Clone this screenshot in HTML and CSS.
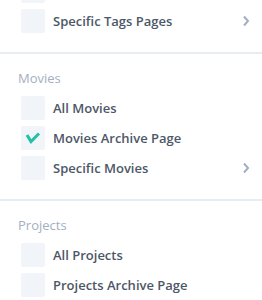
FILE: index.html
```html
<!DOCTYPE html>
<html lang="en">
<head>
<meta charset="UTF-8">
<meta name="viewport" content="width=device-width, initial-scale=1.0">
<title>Pages</title>
<link rel="stylesheet" href="styles.css">
</head>
<body>

<div class="panel">
  <div class="group first">
    <div class="row hidden-top">
      <span class="box"></span>
    </div>
    <div class="row">
      <span class="box"></span>
      <span class="label">Specific Tags Pages</span>
      <svg class="chevron" width="8" height="12" viewBox="0 0 8 12"><path d="M2 1.5 L6 6 L2 10.5" fill="none" stroke="#a3afc0" stroke-width="2"/></svg>
    </div>
  </div>

  <div class="group">
    <div class="heading">Movies</div>
    <div class="row">
      <span class="box"></span>
      <span class="label">All Movies</span>
    </div>
    <div class="row">
      <span class="box">
        <svg width="24" height="24" viewBox="0 0 24 24"><path d="M6 9 L10 15.5 L18 7.5" fill="none" stroke="#22c1a5" stroke-width="3"/></svg>
      </span>
      <span class="label">Movies Archive Page</span>
    </div>
    <div class="row">
      <span class="box"></span>
      <span class="label">Specific Movies</span>
      <svg class="chevron" width="8" height="12" viewBox="0 0 8 12"><path d="M2 1.5 L6 6 L2 10.5" fill="none" stroke="#a3afc0" stroke-width="2"/></svg>
    </div>
  </div>

  <div class="group">
    <div class="heading">Projects</div>
    <div class="row">
      <span class="box"></span>
      <span class="label">All Projects</span>
    </div>
    <div class="row">
      <span class="box"></span>
      <span class="label">Projects Archive Page</span>
    </div>
  </div>
</div>

</body>
</html>
```

FILE: styles.css
```css
body {
  font-family: "Open Sans", sans-serif;
  margin: 0;
  padding: 0;
  background-color: #fff;
  overflow: hidden;
}

.panel {
  width: 262px;
}

.group {
  padding: 14px 10px 19px 21px;
  border-bottom: 2px solid #e8edf3;
}

.group.first {
  padding-top: 0;
}

.hidden-top {
  margin-top: -21px;
}

.heading {
  margin-left: -3px;
  margin-bottom: 8px;
  font-size: 13px;
  line-height: 20px;
  color: #a3afc0;
}

.row {
  display: flex;
  align-items: center;
  height: 24px;
  margin-bottom: 6px;
}

.row:last-child {
  margin-bottom: 0;
}

.box {
  width: 24px;
  height: 24px;
  flex-shrink: 0;
  border-radius: 2px;
  background-color: #f1f4f8;
}

.box svg {
  display: block;
}

.label {
  margin-left: 8px;
  font-size: 13px;
  font-weight: 600;
  color: #4d5767;
  flex: 1;
}

.chevron {
  margin-right: 2px;
}
```
